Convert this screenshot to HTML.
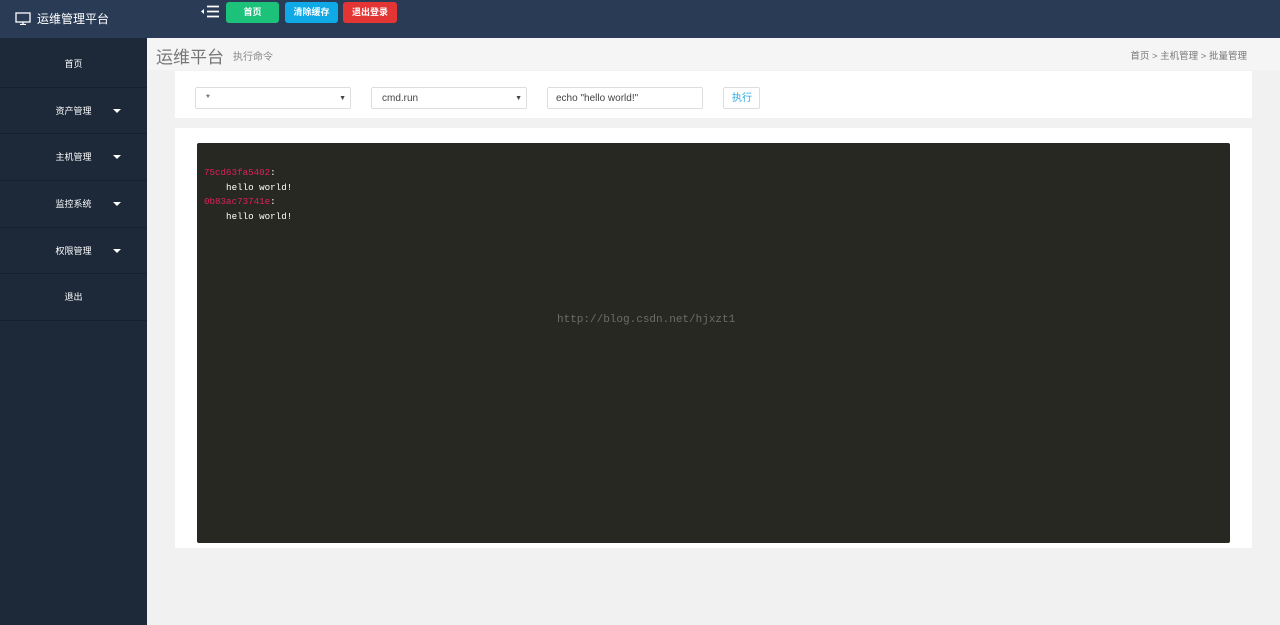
<!DOCTYPE html>
<html><head><meta charset="utf-8"><style>
*{margin:0;padding:0;box-sizing:border-box}
body{width:1280px;height:625px;overflow:hidden;background:#f1f1f1;font-family:"Liberation Sans","Noto Sans CJK SC",sans-serif;position:relative}
.top{position:absolute;left:0;top:0;width:1280px;height:38px;background:#2a3b55}
.logo{position:absolute;left:15px;top:10px;color:#fff;font-size:12px}
.btn{position:absolute;top:2px;height:21px;border-radius:3px;color:#fff;font-size:9px;font-weight:bold;text-align:center;line-height:21px}
.side{position:absolute;left:0;top:38px;width:147px;height:587px;background:#1d2939;padding-top:3px}
.item{height:46.7px;border-bottom:1px solid #162130;color:#fff;font-size:9px;line-height:46px;position:relative;text-align:center}
.caret{position:absolute;left:113px;top:21px;border-left:4px solid transparent;border-right:4px solid transparent;border-top:4px solid #fff}
.hdr{position:absolute;left:147px;top:38px;width:1133px;height:32px;background:#f5f5f5}
.panel{position:absolute;background:#fff}
.sel{position:absolute;top:87px;height:22px;border:1px solid #ddd;border-radius:2px;background:#fff;font-size:10px;color:#444;line-height:22px;padding-left:10px}
.sel .a{position:absolute;right:4px;top:0;font-size:7px}
.term{position:absolute;left:197px;top:143px;width:1033px;height:400px;background:#272822;border-radius:2px;font-family:"Liberation Mono",monospace;font-size:9.2px;color:#fff;padding:23px 7px;line-height:14.5px}
.r{color:#e0205a}
</style></head><body>
<div class="top">
<div class="logo"><svg width="16" height="13" viewBox="0 0 16 13" style="vertical-align:-2px;margin-right:6px"><rect x="1" y="1" width="14" height="9" fill="none" stroke="#fff" stroke-width="1.3"/><path d="M8 10v2M5 12.5h6" stroke="#fff" stroke-width="1.3"/></svg>运维管理平台</div>
<svg style="position:absolute;left:201px;top:5px" width="18" height="13" viewBox="0 0 18 13"><path d="M6 1.5h12M6 6.5h12M6 11.5h12" stroke="#fff" stroke-width="1.8"/><path d="M0 6.5l3-2.5v5z" fill="#fff"/></svg>
<div class="btn" style="left:226px;width:53px;background:#1dc27a">首页</div>
<div class="btn" style="left:285px;width:53px;background:#0ea9e6">清除缓存</div>
<div class="btn" style="left:343px;width:54px;background:#e43535">退出登录</div>
</div>
<div class="side">
<div class="item">首页</div>
<div class="item">资产管理<span class="caret"></span></div>
<div class="item">主机管理<span class="caret"></span></div>
<div class="item">监控系统<span class="caret"></span></div>
<div class="item">权限管理<span class="caret"></span></div>
<div class="item">退出</div>
</div>
<div class="hdr"><span style="position:absolute;left:9px;top:5px;font-size:17px;color:#777">运维平台</span><span style="position:absolute;left:86px;top:10px;font-size:10px;color:#888">执行命令</span><span style="position:absolute;right:33px;top:10px;font-size:9.5px;color:#777">首页 &gt; 主机管理 &gt; 批量管理</span></div>
<div class="panel" style="left:175px;top:71px;width:1077px;height:47px"></div>
<div class="sel" style="left:195px;width:156px">*<span class="a">▼</span></div>
<div class="sel" style="left:371px;width:156px">cmd.run<span class="a">▼</span></div>
<div class="sel" style="left:547px;width:156px;padding-left:8px">echo "hello world!"</div>
<div class="sel" style="left:723px;width:37px;color:#2aa9e0;padding-left:8px">执行</div>
<div class="panel" style="left:175px;top:128px;width:1077px;height:420px"></div>
<div class="term"><span class="r">75cd63fa5402</span>:<br>&nbsp;&nbsp;&nbsp;&nbsp;hello world!<br><span class="r">0b83ac73741e</span>:<br>&nbsp;&nbsp;&nbsp;&nbsp;hello world!
<div style="position:absolute;left:360px;top:170px;color:#6d6d66;font-family:'Liberation Mono',monospace;font-size:11px">http://blog.csdn.net/hjxzt1</div></div>
</body></html>
